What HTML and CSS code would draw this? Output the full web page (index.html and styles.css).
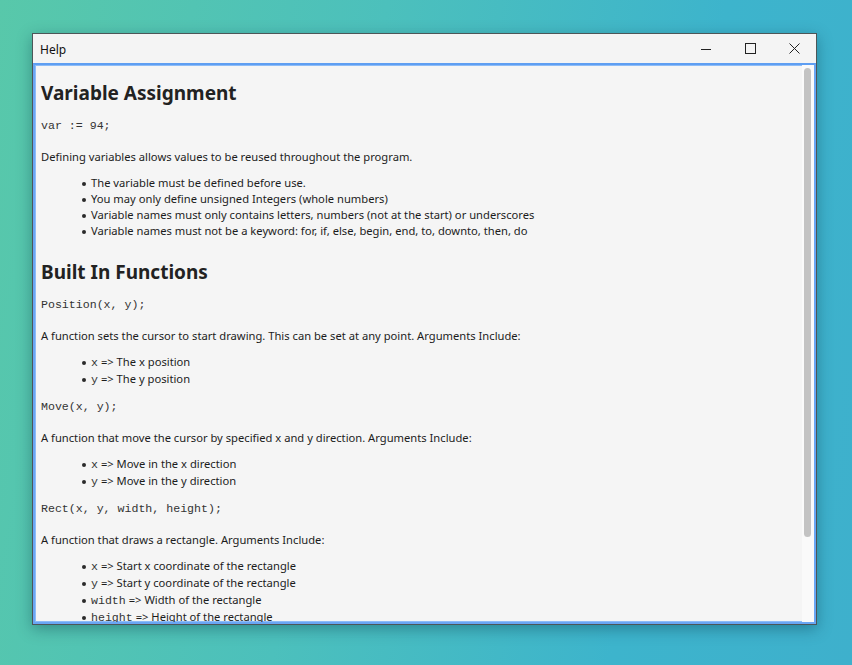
FILE: index.html
```html
<!DOCTYPE html>
<html>
<head>
<meta charset="utf-8">
<link rel="stylesheet" href="styles.css">
</head>
<body>
<div class="window">
  <div class="titlebar">
    <span class="title">Help</span>
    <div class="controls">
      <span class="ctl"><svg width="10" height="10" viewBox="0 0 10 10"><path d="M0 5.5H10" stroke="#222" stroke-width="1"/></svg></span>
      <span class="ctl"><svg width="11" height="11" viewBox="0 0 11 11"><rect x="0.5" y="0.5" width="10" height="10" fill="none" stroke="#222" stroke-width="1"/></svg></span>
      <span class="ctl"><svg width="11" height="11" viewBox="0 0 11 11"><path d="M0.5 0.5L10.5 10.5M10.5 0.5L0.5 10.5" stroke="#222" stroke-width="1"/></svg></span>
    </div>
  </div>
  <div class="content">
    <div class="doc">
      <h1>Variable Assignment</h1>
      <pre class="code">var := 94;</pre>
      <p>Defining variables allows values to be reused throughout the program.</p>
      <ul class="tight">
        <li>The variable must be defined before use.</li>
        <li>You may only define unsigned Integers (whole numbers)</li>
        <li>Variable names must only contains letters, numbers (not at the start) or underscores</li>
        <li>Variable names must not be a keyword: for, if, else, begin, end, to, downto, then, do</li>
      </ul>
      <h1 class="h2">Built In Functions</h1>
      <pre class="code">Position(x, y);</pre>
      <p>A function sets the cursor to start drawing. This can be set at any point. Arguments Include:</p>
      <ul>
        <li><code>x</code> =&gt; The x position</li>
        <li><code>y</code> =&gt; The y position</li>
      </ul>
      <pre class="code">Move(x, y);</pre>
      <p>A function that move the cursor by specified x and y direction. Arguments Include:</p>
      <ul>
        <li><code>x</code> =&gt; Move in the x direction</li>
        <li><code>y</code> =&gt; Move in the y direction</li>
      </ul>
      <pre class="code">Rect(x, y, width, height);</pre>
      <p>A function that draws a rectangle. Arguments Include:</p>
      <ul>
        <li><code>x</code> =&gt; Start x coordinate of the rectangle</li>
        <li><code>y</code> =&gt; Start y coordinate of the rectangle</li>
        <li><code>width</code> =&gt; Width of the rectangle</li>
        <li><code>height</code> =&gt; Height of the rectangle</li>
      </ul>
    </div>
    <div class="scrollbar"><div class="thumb"></div></div>
  </div>
</div>
</body>
</html>
```

FILE: styles.css
```css
html, body {
  margin: 0;
  height: 100%;
}
body {
  background: linear-gradient(100deg, #58c8aa 0%, #4cc0bc 40%, #3db4cc 75%, #3eb0cc 100%);
  padding: 33px 0 0 32px;
  box-sizing: border-box;
  overflow: hidden;
  font-family: "Noto Sans", "Open Sans", sans-serif;
}
.window {
  width: 785px;
  height: 592px;
  box-sizing: border-box;
  border: 1px solid #4c5658;
  background: #f4f4f4;
  display: flex;
  flex-direction: column;
  box-shadow: 0 4px 14px rgba(0, 40, 60, 0.35);
}
.titlebar {
  height: 29px;
  flex: none;
  display: flex;
  align-items: center;
  justify-content: space-between;
  background: #f4f4f4;
}
.title {
  font-size: 12px;
  color: #111;
  padding-left: 7px;
  padding-top: 1px;
}
.controls {
  display: flex;
  height: 100%;
}
.ctl {
  width: 44px;
  display: flex;
  align-items: center;
  justify-content: center;
}
.content {
  flex: 1;
  min-height: 0;
  border: 2px solid #6aa6f4;
  box-shadow: inset 0 0 0 1px #8dbcf7;
  border-top-color: #5e9ef2;
  background: #f5f5f5;
  display: flex;
  overflow: hidden;
}
.doc {
  flex: 1;
  padding: 0 0 0 6px;
  color: #1c1c1c;
  font-size: 11.2px;
  overflow: hidden;
}
.scrollbar {
  width: 12px;
  flex: none;
  background: #fafafa;
  padding: 3px 2px 0 2px;
  box-sizing: border-box;
}
.thumb {
  width: 7px;
  height: 469px;
  background: #c3c3c3;
  border-radius: 4px;
}
h1 {
  font-size: 19px;
  font-weight: 700;
  margin: 15px 0 0 0;
  line-height: 26px;
  color: #222;
}
h1.h2 {
  margin-top: 20px;
}
.code {
  font-family: "Liberation Mono", "Courier New", monospace;
  font-size: 11.6px;
  margin: 12px 0 0 0;
  line-height: 16px;
  color: #333;
}
p {
  margin: 15px 0 0 0;
  line-height: 16px;
}
ul {
  list-style: none;
  margin: 9px 0 10px 0;
  padding-left: 41px;
}
li {
  height: 17px;
  line-height: 17px;
}
ul.tight {
  margin-top: 10px;
  margin-bottom: 11px;
}
ul.tight li {
  height: 16px;
  line-height: 16px;
}
li::before {
  content: "";
  display: inline-block;
  width: 4px;
  height: 4px;
  border-radius: 50%;
  background: #2a2a2a;
  margin-right: 5px;
  vertical-align: middle;
}
code {
  font-family: "Liberation Mono", "Courier New", monospace;
  font-size: 11.6px;
  line-height: 10px;
  color: #333;
}
```
